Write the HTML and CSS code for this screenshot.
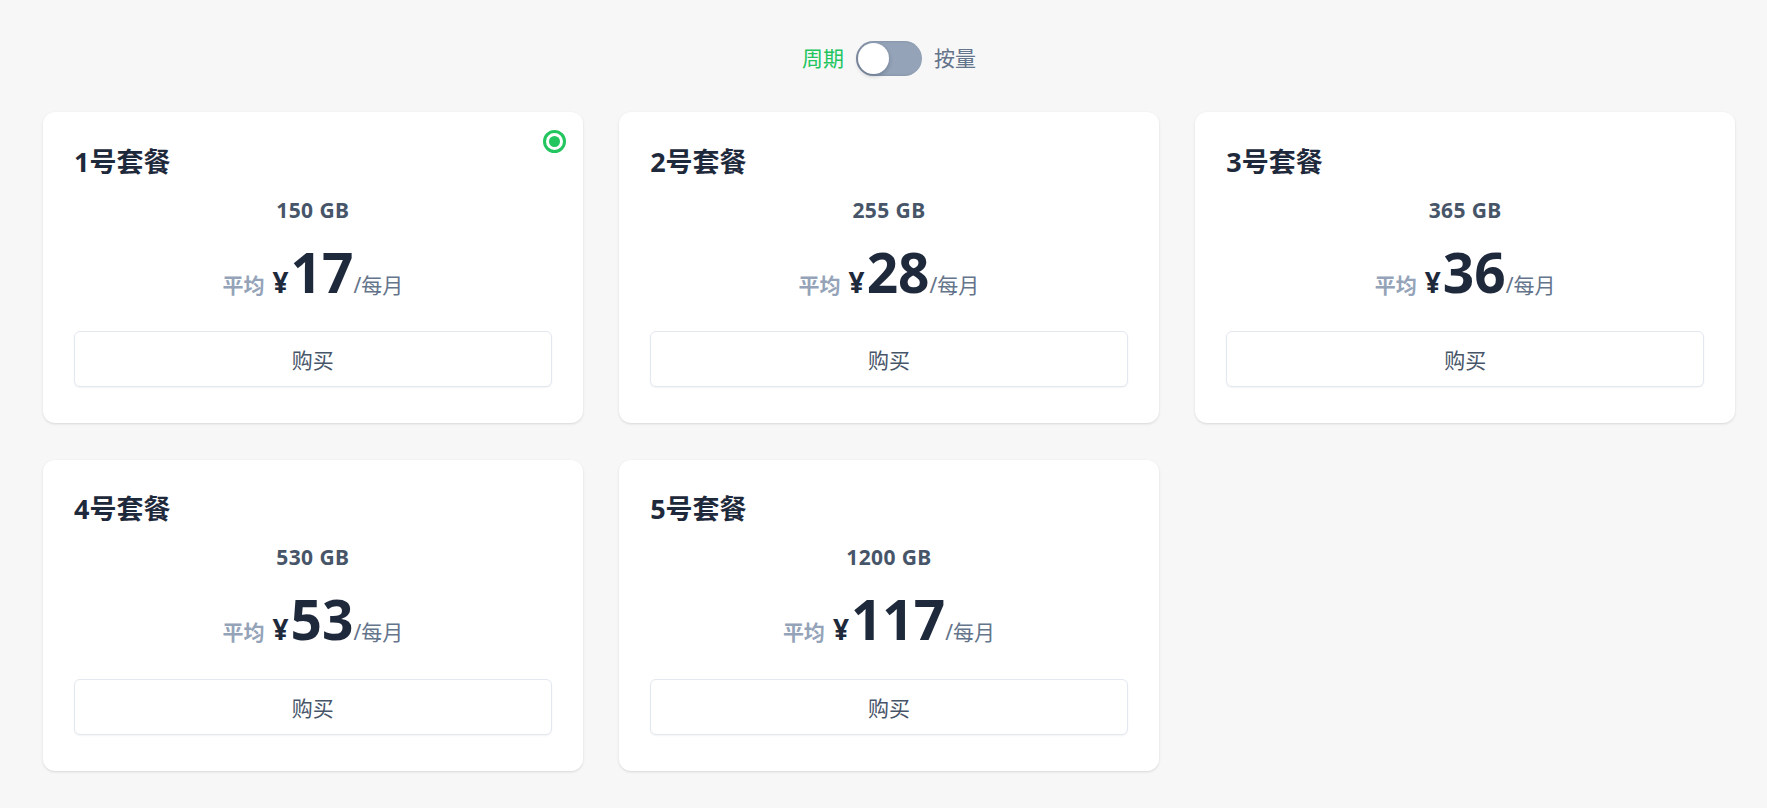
FILE: index.html
```html
<!DOCTYPE html>
<html lang="zh-CN">
<head>
<meta charset="utf-8">
<title>套餐</title>
<link rel="stylesheet" href="styles.css">
</head>
<body>
<div class="page">
  <div class="switch-row">
    <span class="switch-label active">周期</span>
    <span class="switch"><span class="knob"></span></span>
    <span class="switch-label">按量</span>
  </div>
  <div class="plans">
    <div class="card">
      <span class="radio"><span class="dot"></span></span>
      <div class="title">1号套餐</div>
      <div class="traffic">150 GB</div>
      <div class="price"><span class="avg">平均</span><span class="yen">¥</span><span class="num">17</span><span class="unit">/每月</span></div>
      <button class="buy">购买</button>
    </div>
    <div class="card">
      <div class="title">2号套餐</div>
      <div class="traffic">255 GB</div>
      <div class="price"><span class="avg">平均</span><span class="yen">¥</span><span class="num">28</span><span class="unit">/每月</span></div>
      <button class="buy">购买</button>
    </div>
    <div class="card">
      <div class="title">3号套餐</div>
      <div class="traffic">365 GB</div>
      <div class="price"><span class="avg">平均</span><span class="yen">¥</span><span class="num">36</span><span class="unit">/每月</span></div>
      <button class="buy">购买</button>
    </div>
    <div class="card">
      <div class="title">4号套餐</div>
      <div class="traffic">530 GB</div>
      <div class="price"><span class="avg">平均</span><span class="yen">¥</span><span class="num">53</span><span class="unit">/每月</span></div>
      <button class="buy">购买</button>
    </div>
    <div class="card">
      <div class="title">5号套餐</div>
      <div class="traffic">1200 GB</div>
      <div class="price"><span class="avg">平均</span><span class="yen">¥</span><span class="num">117</span><span class="unit">/每月</span></div>
      <button class="buy">购买</button>
    </div>
  </div>
</div>
</body>
</html>
```
FILE: styles.css
```css
* { box-sizing: border-box; }
html, body {
  margin: 0;
  padding: 0;
  background: #f7f7f7;
  font-family: "Noto Sans", "Noto Sans CJK SC", sans-serif;
}
.page {
  padding: 40px 32px 40px 43px;
}
.switch-row {
  display: flex;
  justify-content: center;
  align-items: center;
  gap: 12px;
  height: 36px;
}
.switch-label {
  font-size: 21px;
  color: #64748b;
  line-height: 36px;
}
.switch-label.active { color: #22c55e; }
.switch {
  position: relative;
  width: 66px;
  height: 35px;
  border-radius: 18px;
  background: #94a3b8;
  box-shadow: inset 2px 0 3px rgba(15, 23, 42, 0.18);
}
.knob {
  position: absolute;
  left: 2px;
  top: 2px;
  width: 31px;
  height: 31px;
  border-radius: 50%;
  background: #fff;
  box-shadow: 0 2px 4px rgba(15, 23, 42, 0.25);
}
.plans {
  margin-top: 36px;
  display: grid;
  grid-template-columns: repeat(3, 1fr);
  gap: 36.5px;
}
.card {
  position: relative;
  background: #fff;
  border-radius: 12px;
  padding: 31.5px 31px 36px 31px;
  box-shadow: 0 1px 3px rgba(0, 0, 0, 0.1), 0 1px 2px -1px rgba(0, 0, 0, 0.1);
}
.radio {
  position: absolute;
  top: 18px;
  right: 17px;
  width: 23px;
  height: 23px;
  border-radius: 50%;
  border: 3px solid #22c55e;
  display: flex;
  align-items: center;
  justify-content: center;
}
.radio .dot {
  width: 11px;
  height: 11px;
  border-radius: 50%;
  background: #22c55e;
}
.title {
  font-size: 27px;
  font-weight: 700;
  color: #1e293b;
  line-height: 36px;
}
.traffic {
  margin-top: 16px;
  text-align: center;
  font-size: 21px;
  font-weight: 700;
  color: #475569;
  line-height: 28px;
  letter-spacing: 0.4px;
}
.price {
  margin-top: 21px;
  display: flex;
  justify-content: center;
  align-items: baseline;
  height: 54px;
}
.avg {
  font-size: 21px;
  font-weight: 700;
  color: #94a3b8;
  margin-right: 8px;
}
.yen {
  font-size: 28px;
  font-weight: 700;
  color: #1e293b;
  margin-right: 2px;
}
.num {
  font-size: 55px;
  font-weight: 700;
  color: #1e293b;
  line-height: 54px;
}
.unit {
  font-size: 21px;
  color: #64748b;
}
.buy {
  display: block;
  width: 100%;
  margin-top: 32.7px;
  height: 56px;
  background: #fff;
  border: 1px solid #e2e8f0;
  border-radius: 6px;
  box-shadow: 0 1px 2px rgba(0, 0, 0, 0.05);
  font-family: "Noto Sans", "Noto Sans CJK SC", sans-serif;
  font-size: 21px;
  color: #475569;
  cursor: pointer;
}
```
